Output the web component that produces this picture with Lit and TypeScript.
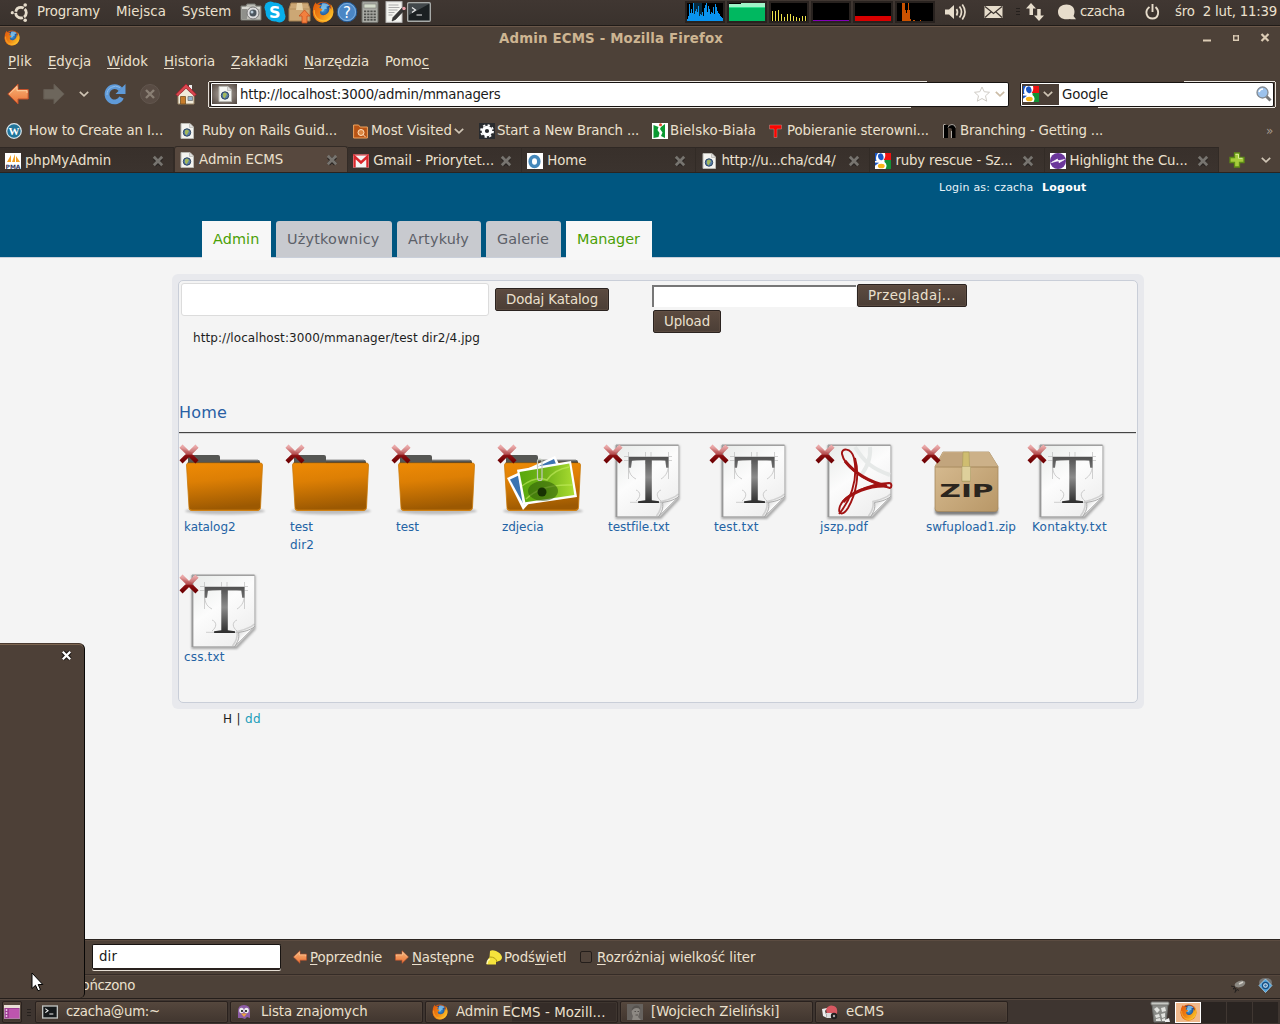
import { LitElement, html, svg, css } from "lit";
import { customElement } from "lit/decorators.js";

/* A run of text; w is the width in pixels that its letters span. */
const t = (text: unknown, w: number, cls = "") =>
  html`<span class="t ${cls}" data-w=${w}>${text}</span>`;

const icon = (w: number, h: number, body: unknown, cls = "") =>
  html`<svg class="ic ${cls}" width=${w} height=${h} viewBox="0 0 ${w} ${h}">${body}</svg>`;

const u = (s: string) => html`<u>${s}</u>`;

const firefoxBody = svg`
  <circle cx="11" cy="11" r="10.3" fill="#d9580d"/>
  <circle cx="11.5" cy="9" r="7.4" fill="url(#ffBlue)"/>
  <path d="M10 2.5c3-1 6 .2 7.4 2.2l-3 1 .6 2-2.4.4-1.6 2.6-2.5-.6.4-3.4z" fill="#8fd0f5" opacity=".75"/>
  <path d="M1 8C1.3 5 2.4 2.8 4 1.2c.2 1.4.7 2.2 1.6 2.9 1.6-.5 3-.2 4 .5-1.700.4-2.200 1.400-2.100 2.500l2.800.9c.3 1-.8 1.800-2.300 2.400-.5 3.200 2.500 4.500 5.300 3.400 3-1.200 4.500-4 4-7.800 1.200 1 1.700 2 1.900 3 .6-2.600.1-4.600-1-6.300 2.200 2 3.400 5 3.200 8.400-.4 6-5 10.300-10.700 10.300C4.500 21.500.2 16.500 1 8z" fill="url(#ffFire)"/>
  <path d="M2.200 9c-.4 6 3.400 10.600 9 10.700 3.500 0 6.500-2 8-5" fill="none" stroke="#ffc43a" stroke-width="1.100" opacity=".7"/>`;
const firefox = (s: number) =>
  html`<svg class="ic" width=${s} height=${s} viewBox="0 0 22 22">${firefoxBody}</svg>`;

const globePage = icon(16, 16, svg`
  <path d="M2 .5h9l3.500 3.500v11.500H2z" fill="#f4f4f0" stroke="#b9b8b2"/>
  <path d="M10.500.8v3.700h3.600" fill="#ddd" stroke="#b9b8b2" stroke-width=".7"/>
  <circle cx="8" cy="9.500" r="3.700" fill="#5a80a8" stroke="#27405f"/>
  <path d="M6 7.500l2-1 2 1.500-1 2-1.500 2.500-1.500-2z" fill="#a4b95b"/>`);
const google = icon(16, 16, svg`
  <rect width="16" height="16" fill="#fff"/>
  <path d="M10 0h6v7H8.500Q11 4 10 0z" fill="#ee1111"/>
  <path d="M9.500 7H16v9h-5.500q2.500-4-1-7z" fill="#129235"/>
  <path d="M0 0h3Q0 4 1.500 8H0z" fill="#1a56c4"/>
  <ellipse cx="5.800" cy="3.800" rx="2.700" ry="3.500" fill="#1a56c4" transform="rotate(-12 5.800 3.800)"/>
  <ellipse cx="6.300" cy="13" rx="3.400" ry="2.300" fill="#f7b416"/>
  <path d="M0 9.500l4 .2-4 3z" fill="#1a56c4"/>`);
const closeTab = icon(12, 12, svg`
  <path d="M2.500 2.500l7 7M9.500 2.500l-7 7" stroke="#262220" stroke-width="4" transform="translate(0 .7)"/>
  <path d="M1.800 1.800l8.400 8.400M10.200 1.800l-8.400 8.400" stroke="#77746f" stroke-width="2.800"/>`);
const chevron = (c = "#cfc4b4") => icon(10, 6, svg`<path d="M.8 .8l4.200 4 4.200-4" fill="none" stroke=${c} stroke-width="1.700"/>`);
const terminal = icon(24, 20, svg`
  <rect x=".7" y=".7" width="22.600" height="18.600" rx="1" fill="#1b2022" stroke="#a7aaa8" stroke-width="1.400"/>
  <path d="M2 2h20L2 13z" fill="#535a5d" opacity=".7"/>
  <path d="M5 5.500l3.500 2.500-3.500 2.500M9.500 13h5.500" stroke="#eee" fill="none" stroke-width="1.200"/>`);
const arrow = (dir: 1 | -1, w: number, h: number, dim = false) => html`<svg class="ic" width=${w} height=${h} viewBox="0 0 22 22">
  <g transform=${dir === 1 ? "translate(22 0) scale(-1 1)" : ""}>
  <path d="M.8 11L11 1.200v5.300h10.200v9.500H11v5z" fill=${dim ? "#6d665c" : "url(#arrowFill)"} stroke=${dim ? "#645c53" : "#c2502a"} stroke-width="1"/>
  ${dim ? "" : svg`<path d="M2.300 11L10 3.500v4.200h10v2.300" fill="none" stroke="#fbd0a0" stroke-width="1"/>`}</g></svg>`;

const cross = svg`
  <path d="M2 2.200l16 15.600M18 2.200L2 17.800" stroke="url(#crossFill)" stroke-width="4.400"/>
  <path d="M.8 3.800l3-3 6.200 6 6.200-6 3 3-6 5" fill="#fff" opacity=".13"/>`;
const folder = svg`
  <ellipse cx="46" cy="67" rx="40" ry="3.500" fill="#000" opacity=".22" filter="url(#soft)"/>
  <path d="M9 24V13q0-2 2-2h28q2 0 2 2v3h38q2 0 2 2v6z" fill="#555653"/>
  <path d="M8.500 21.500V18.500H41v-.5h40v4z" fill="#2d2e2f"/><path d="M41 16h38" stroke="#999" stroke-width="1"/>
  <path d="M7.500 21q0-2 2-2h72q2 0 2 2l-2 42.500q-.1 3-3 3H13q-3 0-3-3z" fill="url(#folderFill)" stroke="#c97909" stroke-width=".8"/>
  <path d="M10 64.500q.3 1.700 3 1.700h65q2.500 0 3-1.700" fill="none" stroke="#d78512"/>`;
const photos = svg`
  <path d="M10 34L58 12l6 12-38 42z" fill="#fff"/><path d="M13 35.500L57 15l4 10-34 36z" fill="#3b74b2"/>
  <path d="M20 25.800L74 17l6 36-54 8z" fill="#fff"/><path d="M22.500 28L72.300 19.500l5 31.500-49 7.200z" fill="url(#leaf)"/>
  <path d="M25 42c9-7 17-9 25-6 4-6 11-11 22-13M29 55c9-9 24-15 46-14" fill="none" stroke="#c5ee61" stroke-width="1.500" opacity=".6"/>
  <ellipse cx="46" cy="47" rx="15" ry="10" fill="#235006" opacity=".5"/><circle cx="45" cy="48" r="4.500" fill="#173203"/>
  <path d="M45 34V17q0-2-2.200-2T40.500 17v17q0 2.500 2.400 2.500T45 34V22" fill="none" stroke="#c3c9be" stroke-width="1.200"/>`;
const page = svg`
  <path d="M12.500 1.500h64v54L58 75H12.500z" fill="#888" opacity=".7" filter="url(#soft)"/>
  <path d="M13.500 1.500h62.300v52L57 72.600H13.500z" fill="url(#pageFill)" stroke="#b9b9b9"/>
  <path d="M13.500 1v72" stroke="#989898" stroke-width="1.800"/>
  <path d="M13 1.300h62.500" stroke="#a0a0a0" stroke-width="1.400"/>`;
const curl = svg`
  <path d="M75.800 52.500C70 57 64 57.500 59.500 58.500c1 6-.5 9-4 14.200z" fill="url(#curlFill)" stroke="#a4a4a4" stroke-width=".9"/>
  <path d="M75.500 50C70 55 64 56 58 57.500c1 6-1 10-4.500 14.500" fill="none" stroke="#888" stroke-width="1.600" opacity=".3"/>`;
const pen = svg`
  <g stroke="#999" stroke-width=".6" opacity=".7"><path d="M21 12.500h48M21 16.500h48M25.500 8v27M65.500 8v27M42.500 8v12M48 8v12M27 58.300h38"/></g>
  <path d="M26 19c-1 8 1 13 7 16M65 19c1 8-2 13-7 16M33 46c5 2 5 7 0 11M58 46c-5 2-5 7 0 11" fill="none" stroke="#c0c0c0" stroke-width=".8"/>
  <text x="45.500" y="58.500" class="tee" text-anchor="middle">T</text>`;
const acrobat = svg`
  <path d="M40 3c10 16 18 22 35 28M55 3c1 12-3 20-10 30" fill="none" stroke="#e6e9e8" stroke-width="4"/>
  <path d="M24 70C34 58 44 37 39 14 36 3 26 4 27 10c2 11 20 27 48 34 2-1 2-5-1-5C54 40 29 51 25 62c-3 9 3 10 8 2 8-14 12-33 7-50" fill="none" stroke="#a11212" stroke-width="1.900"/>
  <path d="M30 17c8 10 20 20 42 25-19-1-36 7-44 16" fill="none" stroke="#a11212" stroke-width="3"/>`;
const zip = svg`
  <path d="M14 64h63v5q-2 2-5 2H19q-5 0-5-3z" fill="#333" opacity=".6" filter="url(#soft)"/>
  <path d="M22 8h46l9 14.500v42q0 3-3 3H17q-3 0-3-3v-42z" fill="url(#boxFill)" stroke="#a4885d" stroke-width=".8"/>
  <path d="M22 8h46l9 14.500H14z" fill="#ccb189"/><path d="M14 22.500L23 8.500h22l-2 14z" fill="#bda078" opacity=".7"/>
  <path d="M14.500 23h62" stroke="#8d7045" opacity=".6"/>
  <path d="M43 8h5l1 29.500h-8l1-29.500z" fill="#cfbd70" stroke="#a99a5b" stroke-width=".6"/><path d="M41 22.500h8.500v14.500H41z" fill="#ded09b" stroke="#a99a68" stroke-width=".5"/>
  <text x="45.500" y="53" class="zip" text-anchor="middle" textLength="54" lengthAdjust="spacingAndGlyphs">ZIP</text>`;

const art: Record<string, unknown> = {
  folder,
  photos: svg`${folder}${photos}`,
  txt: svg`${page}${pen}${curl}`,
  pdf: svg`${page}${acrobat}${curl}`,
  zip,
};

const files: { kind: string; name: string; w: number; second?: string; w2?: number }[] = [
  { kind: "folder", name: "katalog2", w: 50.5 },
  { kind: "folder", name: "test", w: 22, second: "dir2", w2: 23 },
  { kind: "folder", name: "test", w: 22 },
  { kind: "photos", name: "zdjecia", w: 40.5 },
  { kind: "txt", name: "testfile.txt", w: 60.5 },
  { kind: "txt", name: "test.txt", w: 43.5 },
  { kind: "pdf", name: "jszp.pdf", w: 47 },
  { kind: "zip", name: "swfupload1.zip", w: 89 },
  { kind: "txt", name: "Kontakty.txt", w: 74 },
  { kind: "txt", name: "css.txt", w: 39.5 },
];

const bars = (hs: number[], step: number, w: number, fill: string) =>
  hs.map((h, i) => svg`<rect x=${1 + i * step} y=${19 - h} width=${w} height=${h} fill=${fill}/>`);
const graph = (body: unknown) => html`<svg class="ic" width="40" height="22" viewBox="0 0 40 22">
  <rect x="1" y="1" width="38" height="20" fill="#000" stroke="#28221f" stroke-width="2"/><g transform="translate(1 1)">${body}</g></svg>`;
const graphs = [
  graph(svg`<rect x="7" y="1" width="9" height="18" fill="#062b40"/>
    ${bars([2, 5, 17, 8, 12, 8, 18, 7, 10, 12, 9, 15, 5, 7, 6, 9, 5, 13, 16, 18, 9, 15, 12, 7, 9, 8, 14, 7, 17, 14, 10, 8, 7, 5, 4, 3], 1, 1, "#0a93ee")}`),
  graph(svg`<rect x="1" y="2" width="36" height="4" fill="#a0f4c8"/><rect x="13" y="1" width="24" height="4" fill="#a0f4c8"/><rect x="1" y="5" width="36" height="14" fill="#00b860"/><rect x="1" y="5" width="36" height="1" fill="#2ee08c"/>`),
  graph(svg`<g transform="translate(1 0)">${bars([10, 10, 11, 7, 4, 7, 7, 5, 4, 3, 5, 5], 3, 1, "#eee24b")}</g>`),
  graph(svg`<rect x="1" y="18" width="36" height="1" fill="#8200b8"/>`),
  graph(svg`<rect x="1" y="14" width="36" height="5" fill="#d80000"/>`),
  graph(svg`<path d="M6 19V1h3v7h1v3h1V8h1V1h1v7h1v9h1v2zM17 18h2v1h-2zM24 18h1v1h-1z" fill="#cb5200"/>`),
];

const tabs: [unknown, string, number][] = [
  [icon(16, 16, svg`<rect width="16" height="16" fill="#fff"/><path d="M2 9l4-7v7zM7 9l3-8v8zM11 9V3l4 6z" fill="#f2a023"/><text x="8" y="15.500" text-anchor="middle" class="pma">PMA</text>`), "phpMyAdmin", 85],
  [globePage, "Admin ECMS", 83],
  [icon(16, 16, svg`<rect y="1.500" width="16" height="13" fill="#f5f5f5"/><path d="M1.500 14.500V3.500L8 9.500l6.500-6v11" fill="none" stroke="#d9272c" stroke-width="2.400"/><path d="M0 2h16" stroke="#d9272c"/>`), "Gmail - Priorytet...", 120],
  [icon(16, 16, svg`<rect width="16" height="16" fill="#fff"/><ellipse cx="7.500" cy="8.500" rx="4.300" ry="5" fill="none" stroke="#4488bb" stroke-width="3.600"/>`), "Home", 38],
  [globePage, "http://u...cha/cd4/", 113],
  [google, "ruby rescue - Sz...", 116],
  [icon(16, 16, svg`<rect width="16" height="16" fill="#fff"/><circle cx="8" cy="8" r="8" fill="#6b379b"/><path d="M1.500 9.500L9 7.500v2.200l5.500-3.200-7 1.500V6z" fill="#fff" stroke="#fff" stroke-width=".7"/>`), "Highlight the Cu...", 117],
];

@customElement("app-root")
export class AppRoot extends LitElement {
  static styles = css`
    :host { display: block; }
    * { box-sizing: border-box; }
    .screen { position: relative; width: 1280px; height: 1024px; overflow: hidden; display: flex; flex-direction: column; background: #4d4138; color: #ebe0ce; font: 13.33px/16px "DejaVu Sans", sans-serif; }
    .ic { display: block; flex: none; overflow: visible; }
    .t { display: inline-block; white-space: pre; flex: none; justify-self: start; }
    u { text-decoration: underline; text-decoration-thickness: 1px; text-underline-offset: 2px; text-decoration-skip-ink: none; }
    .row { display: grid; align-items: center; justify-items: start; flex: none; white-space: nowrap; }

    .panel { height: 26px; padding: 0 0 2px 10px; background: linear-gradient(#403732, #3a322d); border-bottom: 1px solid #201b18;
      grid-template-columns: 27px 79px 66px 58px 24px 24px 24px 24px 25px 24px 22px 278px 42px 42px 42px 42px 42px 50px 39px 32px 10px 32px 22px 65px 30px auto; }
    .dots { display: grid; gap: 2px; }
    .dots i { width: 4px; height: 1px; background: #25201d; }

    .title { height: 24px; border-top: 1px solid #6a5749; padding: 0 11px 0 4px; grid-template-columns: 495px 704px 30px 28px auto; }
    .title > .ic:first-child { margin-top: -2px; }
    .name { font-weight: bold; color: #cdb592; }
    .menu { height: 23px; padding-left: 8px; grid-template-columns: 40px 59px 57px 67px 73px 81px auto; }
    .nav { height: 42px; padding-left: 7px; grid-template-columns: 36px 36px 25px 36px 35px 33px 812px auto; }
    .field { display: grid; align-items: center; height: 25px; background: #fff; border: 1px solid #171311; border-radius: 2px; color: #1b1b1b; }
    .field .t { padding-top: 1px; }
    .shell { position: relative; }
    .shell::before, .shell::after { content: ""; position: absolute; height: 1px; background: #ece8e2; }
    .url { width: 802px; padding: 0 1px; border-left: 1px solid #e7e1da; }
    .url .field { grid-template-columns: 28px 734px 21px auto; padding-left: 1px; }
    .url::before { top: -1px; left: 0; width: 718px; }
    .url::after { bottom: -1px; left: 0; width: 702px; }
    .site { width: 25px; height: 20px; display: grid; place-items: center; background: radial-gradient(#b6aea7, #51463f); }
    .search { width: 256px; padding-right: 1px; border-right: 1px solid #e7e1da; }
    .search .field { grid-template-columns: 41px 194px auto; }
    .search::before { top: -1px; right: 0; width: 91px; }
    .search::after { bottom: -1px; right: 0; width: 177px; }
    .engine { width: 37px; height: 21px; margin-left: 1px; display: flex; align-items: center; gap: 4px; padding-left: 1px; background: #4a3e36; }

    .marks { height: 31px; padding-left: 6px; grid-template-columns: 23px 150px 23px 151px 18px 83px 25px 18px 155px 18px 99px 18px 156px 17px 306px auto; }
    .more { color: #a69b8e; font-size: 12px; }
    .tabs { display: flex; height: 27px; align-items: flex-end; border-bottom: 1px solid #2a2420; flex: none; }
    .tab { width: 174.100px; height: 25px; display: grid; grid-template-columns: 20px 127px auto; align-items: center; padding: 1px 0 0 5px; background: linear-gradient(#38302b, #3b332e); border-top: 1px solid #2f2824; border-right: 1px solid #322b26; }
    .tab.on { height: 26px; background: #57483e; border: 1px solid #332b26; border-bottom: 0; border-radius: 3px 3px 0 0; padding: 0 0 0 4px; }
    .tabend { display: flex; align-items: center; gap: 16px; padding: 2px 0 0 10px; height: 26px; }

    .content { height: 766px; flex: none; background: #f4f4f4; font-size: 12px; }
    .banner { height: 85px; background: #005680; border-bottom: 1px solid #c9cfda; display: flex; flex-direction: column; }
    .login { height: 48px; flex: none; padding: 7px 0 0 939px; color: #e8f3f8; font-size: 11px; display: grid; grid-template-columns: 103px auto; align-items: start; }
    .login b { color: #fff; }
    .sections { display: flex; flex: none; gap: 5px; padding-left: 202px; align-items: flex-start; font-size: 14.400px; color: #5c6068; }
    .sec { height: 36px; padding: 10px 0 0 11px; background: #c8cacf; border-radius: 3px 3px 0 0; }
    .sec.on { height: 39px; background: #f7f7f7; color: #4aa004; border-radius: 0; }
    .w1 { width: 69px; } .w2 { width: 116px; } .w3 { width: 84px; } .w4 { width: 75px; } .w5 { width: 86px; }
    .frame { margin: 16px 0 0 172px; width: 972px; height: 435px; padding: 6px; border-radius: 6px; background: #e8e9ed; }
    .inner { height: 423px; width: 960px; border: 1px solid #c9ced8; border-radius: 5px; background: #f4f4f4; display: flex; flex-direction: column; }
    .forms { height: 49px; display: grid; grid-template-columns: 316px 157px auto; padding: 2px 0 0 2px; align-items: start; flex: none; }
    .dirname { width: 308px; height: 33px; background: #fff; border: 1px solid #dcdcdc; border-radius: 3px; }
    .btn { height: 23px; display: inline-flex; align-items: center; padding: 1px 0 0 10px; border: 1px solid #2b2320; border-radius: 2px; background: linear-gradient(#5c4b40, #4b3e36); box-shadow: inset 0 0 0 1px #65544880; color: #ebe0ce; font-size: 13.330px; }
    .add { width: 114px; margin: 5px 0 0 -2px; }
    .upload { display: grid; grid-template-columns: 205px auto; row-gap: 3px; margin-left: -2px; padding-top: 1px; }
    .path { width: 204px; height: 22px; margin-top: 1px; background: #fff; border-top: 2px solid #777; border-left: 2px solid #777; }
    .browse { width: 110px; } .send { width: 68px; margin-left: 1px; }
    .link { padding: 0 0 0 14px; height: 72px; flex: none; color: #1e1e1e; }
    .crumb { height: 31px; padding: 2px 0 0 0; color: #2860a4; font-size: 16px; line-height: 18px; border-bottom: 1px solid #444; box-shadow: 0 1px #d6d6d6; margin-right: 1px; flex: none; }
    .files { display: grid; flex: none; grid-template-columns: repeat(9, 106px); grid-auto-rows: 130px; padding-top: 11px; color: #2363a4; line-height: 18px; }
    .file { display: flex; flex-direction: column; align-items: flex-start; }
    .file .ic { margin-bottom: -1px; }
    .file .t { margin-left: 5px; }
    .tee { font: 69px "Liberation Serif", serif; fill: url(#stem); }
    .zip { font: bold 17px "DejaVu Sans", sans-serif; fill: #2a251e; }
    .pma { font: bold 6px "DejaVu Sans", sans-serif; fill: #33375e; }
    .wp { font: bold 11px "Liberation Serif", serif; fill: #fff; }
    .ess { font: bold 16px "DejaVu Sans", sans-serif; fill: #fff; }
    .foot { padding: 2px 0 0 223px; color: #1d1d1d; }
    .foot .cy { color: #1b9db9; }

    .find { height: 35px; border-top: 1px solid #2b2420; box-shadow: inset 0 1px #5c4c41; padding: 1px 0 0 92px; grid-template-columns: 201px 17px 85px 17px 74px 18px 76px 17px auto; }
    .find > .ic { margin-top: -1px; }
    .query { width: 189px; height: 26px; margin-top: -1px; padding: 3px 0 0 6px; border-bottom: 2px solid #29211e; box-shadow: 0 1px #e6ded4; display: block; }
    .check { width: 12px; height: 12px; margin-top: -1px; border: 1px solid #241e1b; border-radius: 2px; background: #51443b; }
    .status { height: 24px; padding-bottom: 2px; border-top: 1px solid #352c27; box-shadow: inset 0 1px #57483e; grid-template-columns: 135px 1096px 27px auto; }
    .status > .t { justify-self: end; }
    .tasks { display: flex; gap: 2px; height: 26px; padding: 1px 2px 0 2px; align-items: center; background: #3e3530; border-top: 1px solid #241e1b; box-shadow: inset 0 1px #55473e; flex: none; }
    .task { width: 193px; height: 22px; display: grid; grid-template-columns: 24px auto; align-items: center; padding-left: 6px; border: 1px solid #29211e; border-radius: 2px; background: linear-gradient(#55473d, #41362f); box-shadow: inset 0 0 0 1px #5d4e4440; }
    .small { width: 20px; padding: 0; display: grid; place-items: center; grid-template-columns: auto; }
    .tasks .dots { margin: 0 2px 0 3px; }
    .busy { background: linear-gradient(90deg, transparent 45%, #352c28 45%), linear-gradient(#55473d, #41362f); }
    .pair { display: flex; } .pair .low { margin: 1px 0 0 0; }
    .trash { margin-left: 140px; }
    .desks { margin-left: 2px; display: grid; grid-template-columns: repeat(4, 26px); height: 21px; width: 103px; background: #2a2421; }
    .desk { border-right: 1px solid #403732; }
    .desk.on { background: #f0b98c; border: 1px solid #fff; display: grid; place-items: center; }
    .desk:last-child { border: 0; }

    .popup { position: absolute; left: 0; top: 643px; width: 85px; height: 355px; background: #4d4037; border-top: 1px solid #4a3a30; border-right: 1px solid #080706; box-shadow: inset 0 1px #7b6450; border-radius: 0 6px 5px 0; display: flex; justify-content: flex-end; align-items: flex-start; padding: 5.500px 12.500px 0 0; }
    .cursor { position: absolute; left: 31px; top: 972px; }
  `;

  /* Spreads each text run over the width that its data names. */
  firstUpdated() {
    this.renderRoot.querySelectorAll<HTMLElement>(".t").forEach((el) => {
      const want = Number(el.dataset.w) + 1;
      const have = el.getBoundingClientRect().width;
      el.style.letterSpacing = `${(want - have) / (el.textContent ?? "").length}px`;
    });
  }

  private panel() {
    const cream = "#e6dccb";
    return html`<div class="row panel">
      ${icon(20, 20, svg`<circle cx="11" cy="10.700" r="5.300" fill="none" stroke=${cream} stroke-width="2.800" stroke-dasharray="9.900 1.200" stroke-dashoffset="4.950"/>
        <circle cx="2.300" cy="10.700" r="1.600" fill=${cream}/><circle cx="15.200" cy="3" r="1.800" fill=${cream}/><circle cx="15.200" cy="18.300" r="1.800" fill=${cream}/>`)}
      ${t("Programy", 62)}${t("Miejsca", 49)}${t("System", 48)}
      ${icon(22, 18, svg`<path d="M1 3h5l1-2h8l1 2h5v14H1z" fill="#bdbdb6" stroke="#777872"/><path d="M2 5h18" stroke="#f2f2ee"/><rect x="2" y="6" width="5" height="10" fill="#8f908b"/><circle cx="13" cy="10" r="6" fill="#ddd" stroke="#777"/><circle cx="13" cy="10" r="3.500" fill="#4c565e"/><circle cx="12" cy="9" r="1.500" fill="#b9cbd8"/>`)}
      ${icon(22, 22, svg`<circle cx="11" cy="11" r="9.500" fill="#08aeea"/><circle cx="6.500" cy="6.500" r="6" fill="#08aeea"/><circle cx="15.500" cy="15.500" r="6" fill="#08aeea"/><text class="ess" x="5" y="17">S</text>`)}
      ${icon(23, 22, svg`<path d="M3 2h17l2 6v12H1V8z" fill="#cca775" stroke="#a48152"/><path d="M1 8h21" stroke="#b4905f"/><path d="M9 2h5l1 7H8z" fill="#e5d0a6"/><path d="M16.500 9l5.500 6h-3v7h-5v-7h-3z" fill="#f2803e" stroke="#c84f1c" stroke-width=".8"/>`)}
      ${firefox(22)}
      ${icon(22, 22, svg`<circle cx="11" cy="11" r="9.800" fill="#4a86c5" stroke="#23558c"/><circle cx="11" cy="11" r="8.500" fill="none" stroke="#80b0df"/><text x="11" y="16.500" text-anchor="middle" font-size="15" fill="#fff">?</text>`)}
      ${icon(18, 22, svg`<rect x="1" y=".6" width="16" height="21" rx="1" fill="#aaaba5" stroke="#6d6e69"/><rect x="3" y="3" width="12" height="4" fill="#d4dccb" stroke="#757770" stroke-width=".6"/>${[9.5, 12.5, 15.5, 18].map((y) => [3, 6.2, 9.4, 12.6].map((x) => svg`<rect x=${x} y=${y} width="2.200" height="1.700" fill="#4f504d"/>`))}`)}
      ${icon(20, 22, svg`<rect x="1" y=".7" width="16" height="20.600" fill="#f3f3ef" stroke="#bbb"/><path d="M3.500 4h10M3.500 6.500h11M3.500 9h9M3.500 11.500h6M3.500 14h4" stroke="#aaa"/><path d="M17 7l2.500 2-9 9.500-3.500 1.500 1-3.500z" fill="#373737" stroke="#111" stroke-width=".5"/><circle cx="19" cy="7.500" r="1.700" fill="#e9a0a8"/>`)}
      ${terminal}
      ${graphs}
      ${icon(21, 18, svg`<path d="M0 6.500h4L9 2v14l-5-4.500H0z" fill=${cream}/><g fill="none" stroke=${cream} stroke-width="1.700"><path d="M11.500 6q2 3 0 6.500M14.500 3.500q4 5.500 0 11M17.300 1.500q5.500 7.500 0 15"/></g>`)}
      ${icon(19, 14, svg`<path d="M.5 1h18v12H.5z" fill=${cream}/><path d="M1 1.500l8.500 7 8.500-7M1 12.500l6-5.500M18 12.500L12 7" fill="none" stroke="#3d3530" stroke-width="1.200"/>`)}
      <span class="dots"><i></i><i></i><i></i></span>
      ${icon(18, 18, svg`<path d="M5 0l5 5.500H7V12H3.500V5.500H0zM13 18l-5-5.500h3.200V6h3.500v6.500H18z" fill=${cream}/>`)}
      ${icon(18, 16, svg`<path d="M8.500.5c5 0 8 3 8 7.200 0 2.300-.8 3.800-1 4.300l2.500 3.200c-3 .2-5 0-6-.3-7 1.600-12-1.800-12-7C0 3.500 3.500.5 8.500.5z" fill=${cream}/>`)}
      ${t("czacha", 44)}
      ${icon(16, 16, svg`<path d="M4.500 3C-1 7 1.500 14.500 7.500 14.500S15 7 10.500 3M7.500 0v8" fill="none" stroke=${cream} stroke-width="1.900"/>`)}
      ${t("śro  2 lut, 11:39", 101)}
    </div>`;
  }

  private chrome() {
    return html`
      <div class="row title">${firefox(16)}${t("Admin ECMS - Mozilla Firefox", 223, "name")}
        ${icon(8, 9, svg`<path d="M0 6.500h8" stroke="#dcccb5" stroke-width="2"/>`)}
        ${icon(7, 7, svg`<path d="M.7 0v5.300h4.600V0M0 .9h6" fill="none" stroke="#dcccb5" stroke-width="1.400"/>`)}
        ${icon(9, 9, svg`<path d="M.5 0l7 7M7.500 0l-7 7" stroke="#dcccb5" stroke-width="2.200"/>`)}
      </div>
      <div class="row menu">
        ${t(html`${u("P")}lik`, 23)}${t(html`${u("E")}dycja`, 42)}${t(html`${u("W")}idok`, 40)}${t(html`${u("H")}istoria`, 50)}
        ${t(html`${u("Z")}akładki`, 56)}${t(html`${u("N")}arzędzia`, 64)}${t(html`Pomo${u("c")}`, 43)}
      </div>
      <div class="row nav">
        ${arrow(-1, 22, 22)}${arrow(1, 22, 22, true)}${chevron()}
        ${icon(22, 22, svg`<path d="M17.500 14.500a7.600 7.600 0 1 1-1-8" fill="none" stroke="#5f9ad8" stroke-width="4.800"/><path d="M21.500 1v10h-10z" fill="#5f9ad8"/><path d="M3 12a8.500 8.500 0 0 1 13-7.500" fill="none" stroke="#8fbdea"/>`)}
        ${icon(20, 20, svg`<circle cx="10" cy="10" r="9.500" fill="#594c44" stroke="#62564e"/><path d="M6 6l8 8M14 6l-8 8" stroke="#8a7f74" stroke-width="2.400"/>`)}
        ${icon(22, 22, svg`<path d="M3 10h16v11H3z" fill="#f0ead9" stroke="#9d8766"/><path d="M14 2h3v6h-3z" fill="#eee"/><path d="M11 1L.8 11.500l2 1.500L11 5l8.300 8 2-1.500z" fill="#d94850" stroke="#a61d29" stroke-width=".8"/><path d="M11 5.500L4.500 12h13z" fill="#f0ead9"/><path d="M5.500 13.500h5V21h-5z" fill="#c77c2b" stroke="#76521f" stroke-width=".8"/><path d="M13 13.500h4.500v4H13z" fill="#8fb2cc" stroke="#777" stroke-width=".8"/>`)}
        <div class="shell url"><div class="field"><span class="site">${globePage}</span>${t("http://localhost:3000/admin/mmanagers", 259.5)}
          ${icon(16, 16, svg`<path d="M8 1l2.200 4.700 5.300.6-4 3.500 1.200 5.400L8 12.500l-4.700 2.700 1.200-5.400-4-3.500 5.300-.6z" fill="#fff" stroke="#d0ccc6"/>`)}${chevron("#cbbca6")}</div></div>
        <div class="shell search"><div class="field"><span class="engine">${google}${chevron()}</span>${t("Google", 45)}
          ${icon(16, 16, svg`<path d="M9 9l5.500 5.500" stroke="#777" stroke-width="3"/><circle cx="6.500" cy="6.500" r="5.500" fill="#9cc2ec" stroke="#848b92" stroke-width="1.300"/><path d="M3 6q1-3 4-3" stroke="#fff" fill="none" stroke-width="1.500"/>`)}</div></div>
      </div>
      <div class="row marks">
        ${icon(16, 16, svg`<circle cx="8" cy="8" r="7.300" fill="#21759b" stroke="#d9e6ec" stroke-width="1.200"/><text x="8" y="12" text-anchor="middle" class="wp">W</text>`)}${t("How to Create an I...", 133)}
        ${globePage}${t("Ruby on Rails Guid...", 134)}
        ${icon(15, 16, svg`<path d="M.6 2h5l1.500 2h7.300v11H.6z" fill="#b85415" stroke="#f0a35c"/><circle cx="8" cy="9.500" r="3" fill="#dd8843" stroke="#ffe1bd"/><path d="M10 11.500l2.500 2.500" stroke="#ffe1bd"/>`)}${t("Most Visited", 80)}${chevron()}
        ${icon(16, 16, svg`<rect width="16" height="16" fill="#292b2e"/><circle cx="8" cy="8" r="3.700" fill="none" stroke="#fff" stroke-width="3.200"/><circle cx="8" cy="8" r="6" fill="none" stroke="#fff" stroke-width="1.800" stroke-dasharray="2.300 2.400"/>`)}${t("Start a New Branch ...", 141)}
        ${icon(16, 16, svg`<rect width="16" height="16" fill="#fff"/><path d="M1.500 2l5 2-1 3 2 3-1 4-5 1zM9 4l4-3v14l-4-2 1.500-3.500L8 6z" fill="#0c9a33"/><circle cx="8.500" cy="1.800" r="1.500" fill="#df4b2e"/>`)}${t("Bielsko-Biała", 85)}
        ${icon(14, 14, svg`<path d="M.5 1h12v4H8v8.500H5V5H.5z" fill="#fa0500" stroke="#bf938a" stroke-width=".5"/>`)}${t("Pobieranie sterowni...", 141)}
        ${icon(13, 16, svg`<rect x="1" y="2" width="4" height="13"/><path d="M5 5q1-3.500 4-3.500 3.500 0 3.500 4v9.500H9V7q0-2-2-2z"/><path d="M.5 1.500h2M.5 2v13M8.500 8v7M5 4.500q1-3 4-3t3.500 3" fill="none" stroke="#c9c4be" stroke-width=".8"/>`)}${t("Branching - Getting ...", 142)}
        <span class="more">»</span>
      </div>
      <div class="tabs">
        ${tabs.map(([ic, name, w], i) => html`<div class="tab ${i === 1 ? "on" : ""}">${ic}${t(name, w)}${closeTab}</div>`)}
        <div class="tabend">${icon(16, 16, svg`<path d="M5.500 1h5v4.500H15v5h-4.500V15h-5v-4.500H1v-5h4.500z" fill="#a6cc3c" stroke="#5e8c16" stroke-width="1.300"/><path d="M6.500 2.300h3v4h4" fill="none" stroke="#dcee9b"/>`)}${chevron()}</div>
      </div>`;
  }

  private content() {
    return html`<div class="content">
      <div class="banner">
        <div class="login">${t("Login as: czacha", 93.5)}<b>${t("Logout", 43.5)}</b></div>
        <div class="sections">
          <div class="sec on w1">${t("Admin", 45.5)}</div><div class="sec w2">${t("Użytkownicy", 91.5)}</div><div class="sec w3">${t("Artykuły", 60)}</div>
          <div class="sec w4">${t("Galerie", 51)}</div><div class="sec on w5">${t("Manager", 62)}</div>
        </div>
      </div>
      <div class="frame"><div class="inner">
        <div class="forms">
          <div class="dirname"></div><div class="btn add">${t("Dodaj Katalog", 91)}</div>
          <div class="upload"><div class="path"></div><div class="btn browse">${t("Przeglądaj...", 87)}</div><div class="btn send">${t("Upload", 45)}</div></div>
        </div>
        <div class="link">${t("http://localhost:3000/mmanager/test dir2/4.jpg", 286)}</div>
        <div class="crumb">${t("Home", 47)}</div>
        <div class="files">
          ${files.map((f) => html`<div class="file">${icon(90, 75, svg`${art[f.kind]}<g>${cross}</g>`)}${t(f.name, f.w)}${f.second ? t(f.second, f.w2 ?? 0) : ""}</div>`)}
        </div>
      </div></div>
      <div class="foot">${t(html`H | <span class="cy">dd</span>`, 37)}</div>
    </div>`;
  }

  private bottom() {
    return html`
      <div class="row find">
        <div class="field query">${t("dir", 17)}</div>
        ${arrow(-1, 14, 14)}${t(html`${u("P")}oprzednie`, 71)}${arrow(1, 14, 14)}${t(html`${u("N")}astępne`, 61)}
        ${icon(16, 15, svg`<path d="M4 1q2-1.500 6 0 5 2 6 6 0 3-3 4l-3 1v2.500H.5L2 10q0-2 1.500-2.500z" fill="#f5e33c"/><path d="M4 7q6 0 7 5" stroke="#b29c12" fill="none"/><path d="M1 14q.5-5 3-4.500" fill="none" stroke="#fffab8" stroke-width="1.500"/>`)}${t(html`Podś${u("w")}ietl`, 61.5)}
        <span class="check"></span>${t(html`${u("R")}ozróżniaj wielkość liter`, 157.5)}
      </div>
      <div class="row status">${t("Zakończono", 76)}<span></span>
        ${icon(15, 14, svg`<ellipse cx="9" cy="5" rx="5.500" ry="3.200" transform="rotate(-18 9 5)" fill="#8c8983"/><path d="M8 5l4-2" stroke="#d5d1ca" stroke-width="1.500"/><path d="M0 7l4 1-2 2 3-.5-1 4 2-3 2 1" fill="none" stroke="#262220"/>`)}
        ${icon(15, 15, svg`<path d="M1 5q0-5 6.500-5T14 5l-2 5H3z" fill="#767675"/><path d="M7.500 1L14 7.500 7.500 14.500 1 7.500z" fill="#4da2da" stroke="#b8daf2" stroke-width=".7"/><circle cx="7.500" cy="7.500" r="3" fill="#dcecf8" stroke="#174e82" stroke-width="1.300"/><circle cx="7.500" cy="7.500" r="1.300" fill="#2d74ad"/>`)}
      </div>
      <div class="tasks">
        <div class="task small">${icon(16, 14, svg`<rect x=".5" y=".5" width="15" height="13" fill="#9f3d95" stroke="#b27fa9"/><rect width="16" height="3" fill="#eadfd6"/><path d="M2.500 4v9" stroke="#e6c6e1" stroke-width="1.500" stroke-dasharray="2 1"/><rect x="5" y="4" width="10" height="9" fill="#bd55ae"/>`)}</div>
        <span class="dots"><i></i><i></i><i></i></span>
        <div class="task"><svg class="ic" width="16" height="14" viewBox="0 0 24 20">${svg`<rect x="1" y="1" width="22" height="18" fill="#15191b" stroke="#c0c3c1" stroke-width="2"/><path d="M5 5l4 3-4 3M11 13h6" stroke="#eee" fill="none" stroke-width="1.700"/>`}</svg>${t("czacha@um:~", 93)}</div>
        <div class="task">${icon(14, 16, svg`<path d="M1 14V7q0-6 6-6t6 6v7l-3-1-2 2-3-1z" fill="#8d5da6"/><ellipse cx="4.500" cy="6.500" rx="2.300" ry="2.800" fill="#eee"/><ellipse cx="9.500" cy="6.500" rx="2.300" ry="2.800" fill="#eee"/><circle cx="5" cy="7" r="1"/><circle cx="9" cy="7" r="1"/><path d="M4 9.500h6L7 13z" fill="#eca340"/>`)}${t("Lista znajomych", 105.5)}</div>
        <div class="task busy">${firefox(16)}<span class="pair">${t("Admin E", 54)}${t("CMS - Mozill...", 93.5, "low")}</span></div>
        <div class="task">${icon(16, 16, svg`<rect width="16" height="16" fill="#66625e"/><path d="M5 16l1-4q-2-3-1-7 2-4 6-2 3 2 1 7l-1 3 3 3z" fill="#8d8983"/><path d="M4.500 7q0-5 5-5.500 3.500 0 4 4-4-2.500-7-.5z" fill="#57534f"/><path d="M7.500 7.500h1.500M10.500 7.500H12M8.500 11h2.500" stroke="#55514d"/>`)}${t("[Wojciech Zieliński]", 127.5)}</div>
        <div class="task">${icon(16, 16, svg`<path d="M4 5q3-5 8-3 4 1 3 8H5z" fill="#d75861"/><path d="M0 5l5-1-2 3 2 7-4-2z" fill="#eee"/><path d="M4 9h7v5H5z" fill="#ddd"/><circle cx="12" cy="12" r="3.200" fill="#201e1d"/><circle cx="12" cy="12" r="1.200" fill="#aaa"/>`)}${t("eCMS", 37)}</div>
        ${icon(21, 22, svg`<path d="M2 3h16l-2 18H4z" fill="#8a8b87" stroke="#6c6d6a"/><path d="M4 8l3-2 3 3-3 3zM11 7l4-1 1 4-4 1zM5 14l4-1 1 3-4 1zM11 13l4-1v4l-3 1zM6 18l4-1 1 3H6zM12 18l3-1v3h-3z" fill="#e2e3df"/><rect x="1" y="1" width="18" height="3" rx="1" fill="#c6c7c2" stroke="#747571"/><path d="M15 19l4-2 1 4h-5z" fill="#eee"/>`, "trash")}
        <div class="desks"><span class="desk on">${firefox(17)}</span><span class="desk"></span><span class="desk"></span><span class="desk"></span></div>
      </div>`;
  }

  render() {
    return html`<div class="screen">
      ${this.panel()}${this.chrome()}${this.content()}${this.bottom()}
      <div class="popup">${icon(11, 11, svg`<path d="M2 2l7 7M9 2L2 9" stroke="#1c1715" stroke-width="4.500"/><path d="M1.800 1.800l7.400 7.400M9.200 1.800L1.800 9.200" stroke="#fff" stroke-width="2.300"/>`)}</div>
      <svg class="cursor" width="14" height="20" viewBox="0 0 14 20">
        <defs>
          <linearGradient id="folderFill" x1="0" y1="0" x2=".15" y2="1"><stop offset="0" stop-color="#ee8a05"/><stop offset=".4" stop-color="#dd7f04"/><stop offset="1" stop-color="#9c5902"/></linearGradient>
          <linearGradient id="pageFill" x1="0" y1="0" x2=".6" y2="1"><stop offset="0" stop-color="#e8ebe9"/><stop offset=".5" stop-color="#fcfcfc"/><stop offset="1" stop-color="#efefef"/></linearGradient>
          <linearGradient id="curlFill" x1="0" y1="0" x2="1" y2="1"><stop offset="0" stop-color="#b9b9b9"/><stop offset=".5" stop-color="#fff"/><stop offset="1" stop-color="#ccc"/></linearGradient>
          <linearGradient id="stem" gradientUnits="userSpaceOnUse" x1="0" y1="13" x2="0" y2="58"><stop offset="0" stop-color="#505050"/><stop offset=".45" stop-color="#8b8b8b"/><stop offset="1" stop-color="#303030"/></linearGradient>
          <linearGradient id="boxFill" x1="0" y1="0" x2="1" y2="1"><stop offset="0" stop-color="#d9be94"/><stop offset="1" stop-color="#b89767"/></linearGradient>
          <linearGradient id="crossFill" gradientUnits="userSpaceOnUse" x1="0" y1="2" x2="0" y2="18"><stop offset="0" stop-color="#eaa0a0"/><stop offset=".5" stop-color="#b54f50"/><stop offset=".6" stop-color="#8a1012"/><stop offset="1" stop-color="#6d0002"/></linearGradient>
          <linearGradient id="arrowFill" x1="0" y1="0" x2="0" y2="1"><stop offset="0" stop-color="#f9b57a"/><stop offset="1" stop-color="#ea7437"/></linearGradient>
          <linearGradient id="ffFire" x1="0" y1="0" x2="1" y2=".6"><stop offset="0" stop-color="#e0560b"/><stop offset=".5" stop-color="#ee8013"/><stop offset="1" stop-color="#f9bd27"/></linearGradient>
          <radialGradient id="ffBlue"><stop offset="0" stop-color="#3f9bdc"/><stop offset="1" stop-color="#163f86"/></radialGradient>
          <linearGradient id="leaf" x1="0" y1="0" x2="1" y2="0"><stop offset="0" stop-color="#57a80d"/><stop offset=".5" stop-color="#74b41a"/><stop offset="1" stop-color="#aadd31"/></linearGradient>
          <filter id="soft" x="-10%" y="-40%" width="120%" height="180%"><feGaussianBlur stdDeviation="1"/></filter>
        </defs>
        <path d="M1 1v15.500l3.500-3.200 2.500 5.500 2.500-1.100L7.200 12.500h4.600z" fill="#fff" stroke="#000"/>
      </svg>
    </div>`;
  }
}
